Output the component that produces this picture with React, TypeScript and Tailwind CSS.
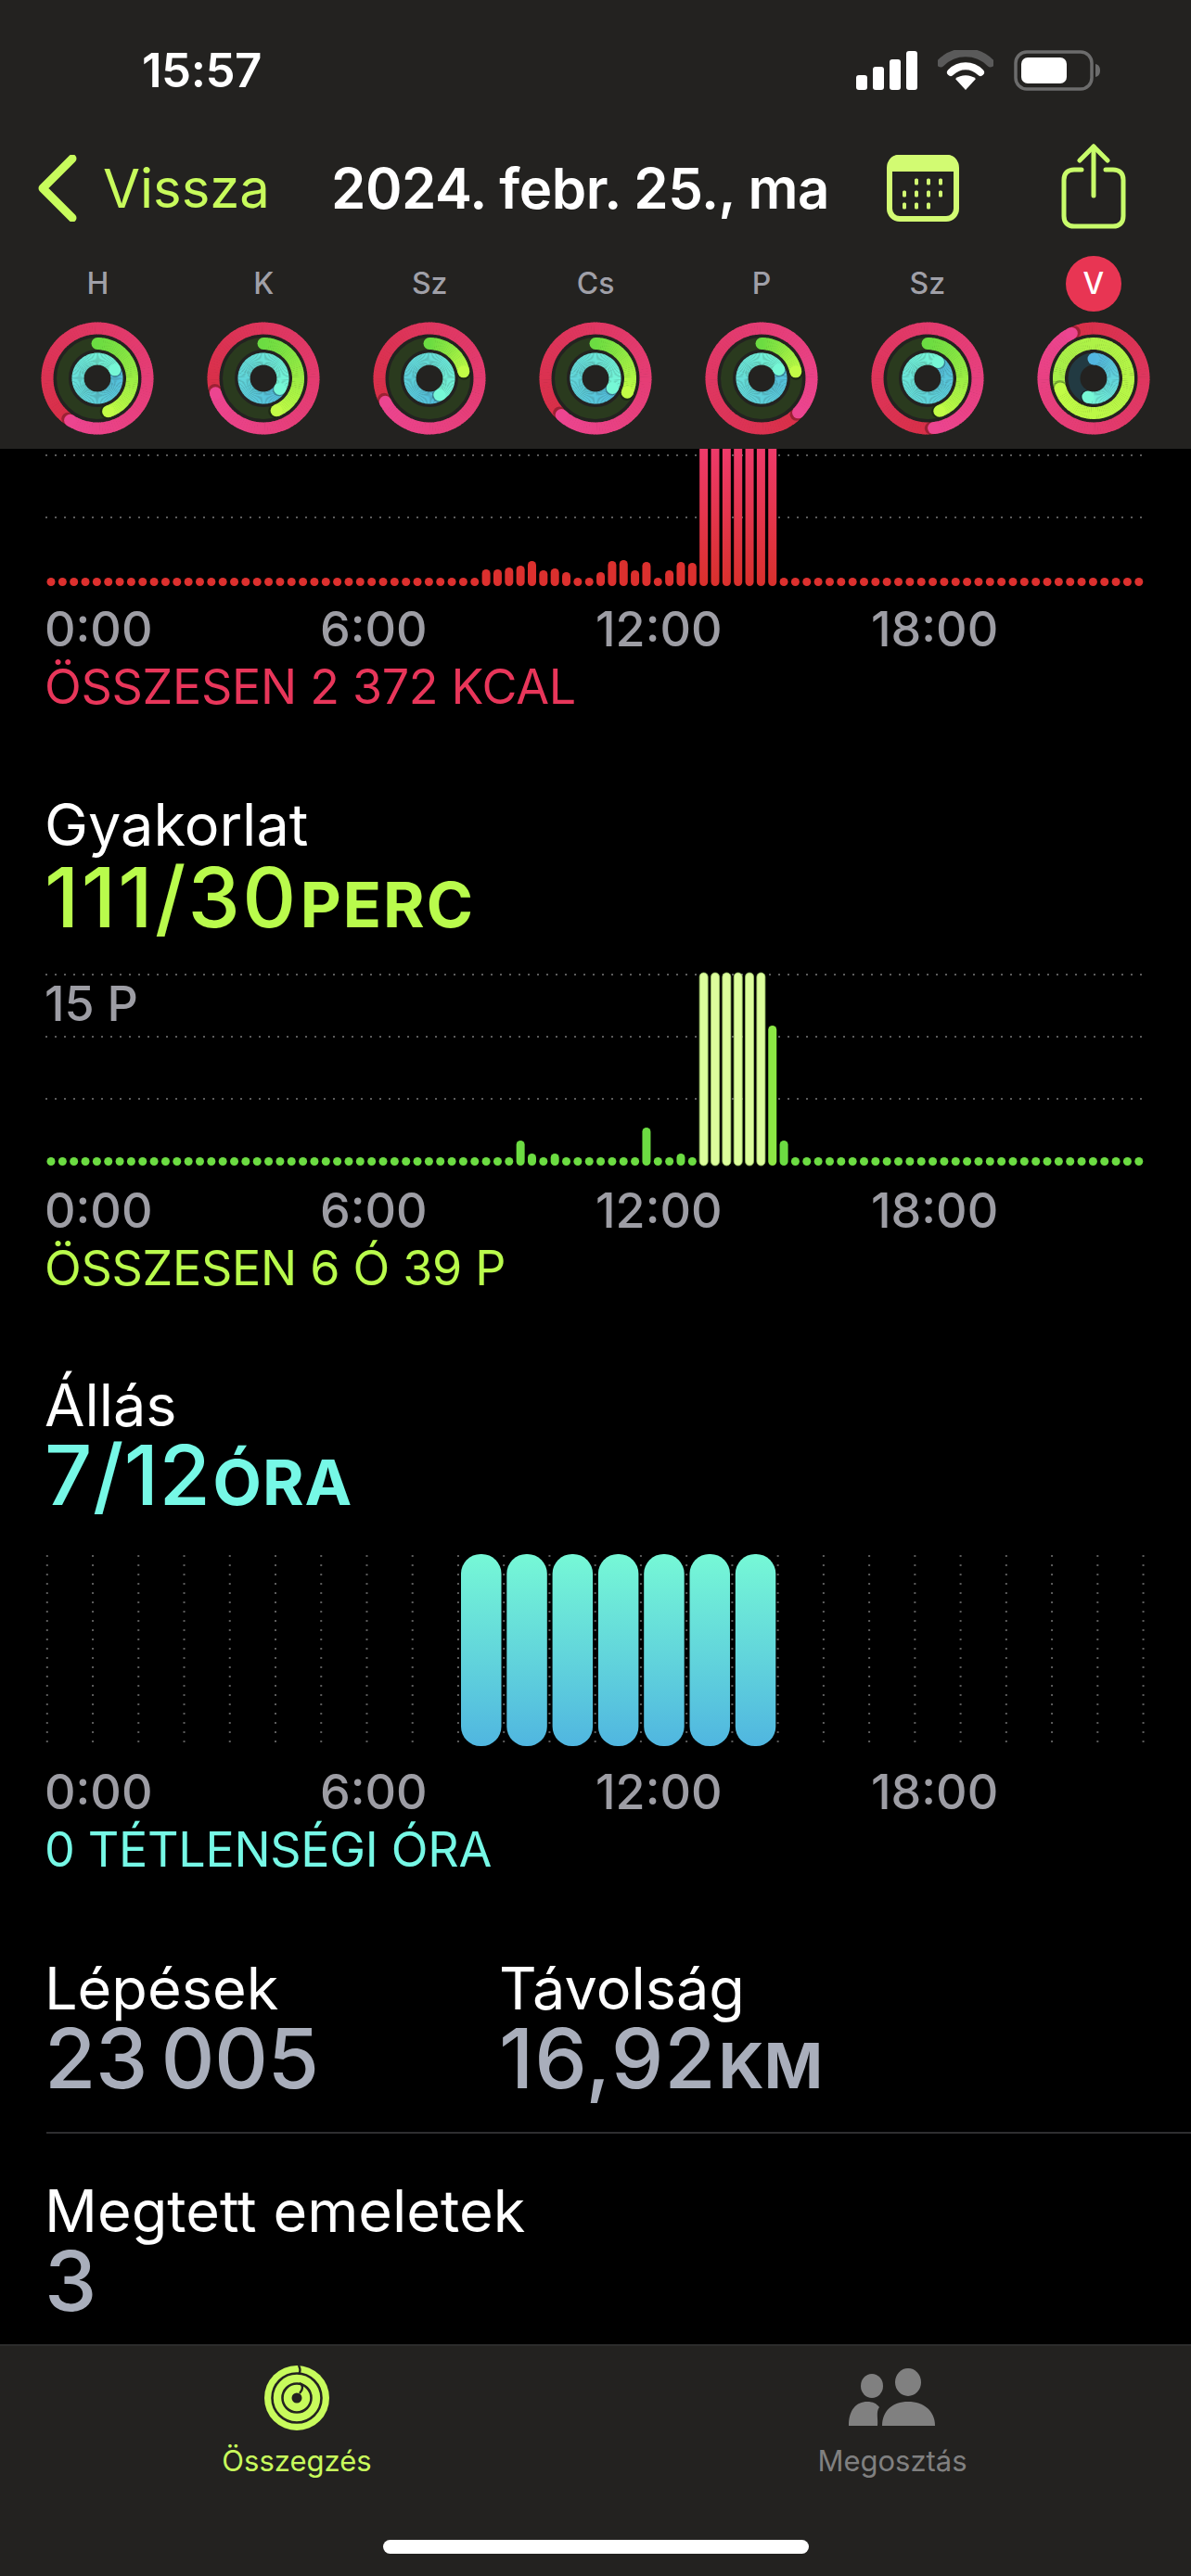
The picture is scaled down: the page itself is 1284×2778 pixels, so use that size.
const FONT = "font-['Inter','Liberation_Sans',sans-serif]";

const pol = (r: number, deg: number, c = 70) => {
  const a = ((deg - 90) * Math.PI) / 180;
  return [c + r * Math.cos(a), c + r * Math.sin(a)];
};
const hex = (s: string) => [1, 3, 5].map((i) => parseInt(s.slice(i, i + 2), 16));
const mix = (a: string, b: string, t: number) => {
  const A = hex(a);
  const B = hex(b);
  return `rgb(${A.map((v, i) => Math.round(v + (B[i] - v) * t)).join(",")})`;
};

function Arc({ r, end, c0, c1, track, full }: { r: number; end: number; c0: string; c1: string; track: string; full: boolean }) {
  const w = 13;
  const start = full ? end : 0;
  const span = full ? 360 : end;
  const step = 3;
  const n = Math.ceil(span / step);
  const seg = (i: number) => {
    const a = start + i * step;
    const b = Math.min(start + span, a + step + 0.6);
    const [x0, y0] = pol(r, a);
    const [x1, y1] = pol(r, b);
    return <path key={i} d={`M${x0} ${y0}A${r} ${r} 0 0 1 ${x1} ${y1}`} stroke={mix(c0, c1, i / n)} strokeWidth={w} fill="none" />;
  };
  const ids = Array.from({ length: n }, (_, i) => i);
  const [ex, ey] = pol(r, start + span);
  const [sx, sy] = pol(r, 0);
  const [shx, shy] = pol(r, start + span + 3);
  return (
    <g>
      {!full && <circle cx={70} cy={70} r={r} stroke={track} strokeWidth={w} fill="none" />}
      {!full && <circle cx={sx} cy={sy} r={w / 2} fill={c0} />}
      {ids.slice(0, Math.max(0, n - 18)).map(seg)}
      <circle cx={shx} cy={shy} r={w / 2 + 0.5} fill="#000" opacity={0.28} />
      {ids.slice(Math.max(0, n - 18)).map(seg)}
      <circle cx={ex} cy={ey} r={w / 2} fill={c1} />
    </g>
  );
}

const days = [
  { l: "H", o: 213, m: 162, i: 64 },
  { l: "K", o: 253, m: 158, i: 123 },
  { l: "Sz", o: 242, m: 79, i: 149 },
  { l: "Cs", o: 223, m: 114, i: 120 },
  { l: "P", o: 133, m: 79, i: 63 },
  { l: "Sz", o: 173, m: 160, i: 33 },
  { l: "V", o: 334, m: 253, i: 197, today: true },
];

function Rings({ o, m, i, today }: { o: number; m: number; i: number; today?: boolean }) {
  return (
    <svg width={140} height={140} viewBox="0 0 140 140" className="block">
      <Arc r={54} end={o} c0="#d82f47" c1="#ec4590" track="#3a1020" full />
      <Arc r={37.5} end={m} c0={today ? "#a6ee48" : "#6cdc42"} c1="#c2fc46" track="#2a3a1e" full={!!today} />
      <Arc r={21} end={i} c0={today ? "#52b6e0" : "#52bcdc"} c1="#76f8d6" track="#223a42" full={!today} />
    </svg>
  );
}

const ticks = Array.from({ length: 96 }, (_, i) => i);
const bx = (i: number) => 6 + i * 12.345;
const redH: Record<number, number> = { 38: 18, 39: 18, 40: 20, 41: 22, 42: 27, 43: 17, 44: 19, 45: 15, 48: 15, 49: 27, 50: 28, 51: 17, 52: 26, 54: 17, 55: 26, 56: 25 };
const greenH: Record<number, number> = { 41: 27, 42: 13, 44: 13, 52: 41, 55: 13, 63: 151, 64: 27 };

function Grid({ ys }: { ys: number[] }) {
  return (
    <>
      {ys.map((y) => (
        <line key={y} x1={0} x2={1184} y1={y} y2={y} stroke="#5c5c5c" strokeWidth={2} strokeDasharray="2 8" />
      ))}
    </>
  );
}

function MoveChart() {
  return (
    <svg width={1284} height={148} viewBox="0 0 1284 148" className="block -ml-[48px]">
      <defs>
        <linearGradient id="moveTall" gradientUnits="userSpaceOnUse" x1="0" y1="0" x2="0" y2="148">
          <stop offset="0" stopColor="#ee3a6a" />
          <stop offset="1" stopColor="#d9302c" />
        </linearGradient>
      </defs>
      <g transform="translate(49 0)">
        <Grid ys={[7, 74]} />
        {ticks.map((i) => {
          const tall = i >= 57 && i <= 63;
          const h = tall ? 190 : redH[i] ?? 9;
          return <rect key={i} x={bx(i) - 4.5} y={148 - h} width={9} height={h} rx={4.5} fill={tall ? "url(#moveTall)" : "#dc302e"} />;
        })}
      </g>
    </svg>
  );
}

function ExerciseChart() {
  return (
    <svg width={1284} height={218} viewBox="0 0 1284 218" className="block -ml-[48px]">
      <g transform="translate(49 0)">
        <Grid ys={[11, 78, 145]} />
        {ticks.map((i) => {
          const tall = i >= 57 && i <= 62;
          const h = tall ? 208 : greenH[i] ?? 9;
          const fill = tall ? "#dcfd9c" : i === 63 ? "#8ce744" : "#6cdc42";
          return (
            <rect key={i} x={bx(i) - 4.5} y={217 - h} width={9} height={h} rx={4.5} fill={fill} stroke={tall ? "#9cc468" : "none"} strokeWidth={tall ? 0.8 : 0} />
          );
        })}
      </g>
    </svg>
  );
}

function StandChart() {
  const cols = Array.from({ length: 25 }, (_, i) => i);
  const bars = [9, 10, 11, 12, 13, 14, 15];
  return (
    <svg width={1284} height={210} viewBox="0 0 1284 210" className="block -ml-[48px]">
      <defs>
        <linearGradient id="stand" x1="0" y1="0" x2="0" y2="1">
          <stop offset="0" stopColor="#76f8d6" />
          <stop offset="1" stopColor="#50b6e0" />
        </linearGradient>
      </defs>
      {cols.map((i) => (
        <line key={i} x1={50.8 + i * 49.24} x2={50.8 + i * 49.24} y1={1} y2={204} stroke="#5c5c5c" strokeWidth={2} strokeDasharray="2 8" />
      ))}
      {bars.map((i) => (
        <rect key={i} x={497 + (i - 9) * 49.3} y={0} width={43.5} height={207} rx={21} fill="url(#stand)" />
      ))}
    </svg>
  );
}

function Times() {
  return (
    <div className="grid grid-cols-[297px_297px_297px_297px] text-[52px] leading-[56px] font-medium text-[#9d9da4]">
      <span>0:00</span>
      <span>6:00</span>
      <span>12:00</span>
      <span>18:00</span>
    </div>
  );
}

function Big({ color, n, u, numClass, unitClass }: { color: string; n: string; u?: string; numClass: string; unitClass?: string }) {
  return (
    <div className={`flex items-baseline ${color}`}>
      <span className={`text-[90px] leading-[88px] font-medium ${numClass}`}>{n}</span>
      {u && <span className={`text-[68px] leading-[88px] font-bold ${unitClass}`}>{u}</span>}
    </div>
  );
}

function StatusIcons() {
  return (
    <div className="flex items-center">
      <svg width={68} height={42} viewBox="0 0 68 42">
        <rect x={0} y={26} width={12} height={16} rx={3} fill="#fff" />
        <rect x={18} y={17} width={12} height={25} rx={3} fill="#fff" />
        <rect x={36} y={9} width={12} height={33} rx={3} fill="#fff" />
        <rect x={54} y={0} width={12} height={42} rx={3} fill="#fff" />
      </svg>
      <svg width={60} height={44} viewBox="0 0 60 44" className="ml-[20px]">
        <path d="M3 14C18 -1 42 -1 57 14" stroke="#5a5a5a" strokeWidth={9} fill="none" strokeLinecap="round" />
        <path d="M14 24C23 15 37 15 46 24" stroke="#fff" strokeWidth={8} fill="none" strokeLinecap="round" />
        <path d="M30 43L19 31C25 26 35 26 41 31Z" fill="#fff" />
      </svg>
      <svg width={94} height={44} viewBox="0 0 94 44" className="ml-[22px]">
        <rect x={2} y={2} width={82} height={40} rx={12} stroke="#6c6c6c" strokeWidth={3.5} fill="none" />
        <rect x={8} y={8} width={49} height={28} rx={7} fill="#fff" />
        <path d="M88 15C92 16 93 19 93 22C93 25 92 28 88 29Z" fill="#6c6c6c" />
      </svg>
    </div>
  );
}

function CalendarIcon() {
  const dots = [[32, 29], [45, 29], [58, 29], [19, 42], [32, 42], [45, 42], [58, 42], [19, 55], [32, 55], [45, 55]];
  return (
    <svg width={78} height={72} viewBox="0 0 78 72" className="block">
      <rect x={3} y={3} width={72} height={66} rx={11} fill="#232220" stroke="#d2fb72" strokeWidth={6} />
      <path d="M1 18V12C1 5 6 0 12 0H66C72 0 77 5 77 12V18Z" fill="#d2fb72" />
      {dots.map(([x, y]) => (
        <rect key={`${x}-${y}`} x={x - 2} y={y - 3.5} width={4} height={7} rx={1.5} fill="#d2fb72" />
      ))}
    </svg>
  );
}

function ShareIcon() {
  return (
    <svg width={70} height={92} viewBox="0 0 70 92" fill="none" stroke="#c8fb6a" strokeWidth={5} strokeLinecap="round" strokeLinejoin="round" className="block">
      <path d="M35 3V56" />
      <path d="M20 18L35 3L50 18" />
      <path d="M22 28H14C7 28 3 32 3 39V78C3 85 7 89 14 89H56C63 89 67 85 67 78V39C67 32 63 28 56 28H48" />
    </svg>
  );
}

function SummaryIcon() {
  return (
    <svg width={72} height={72} viewBox="0 0 72 72" fill="none" className="block">
      <circle cx={36} cy={36} r={35} fill="#c8fb5c" />
      <circle cx={36} cy={36} r={26.5} stroke="#232220" strokeWidth={2.6} />
      <circle cx={36} cy={36} r={15.5} stroke="#232220" strokeWidth={2.6} />
      <circle cx={36} cy={36} r={5.5} fill="#232220" />
      <path d="M38 1C40 5 40 8 38 10" stroke="#232220" strokeWidth={2.4} />
      <path d="M39 20C43 22 43 27 39 31" stroke="#232220" strokeWidth={2.4} />
    </svg>
  );
}

function PeopleIcon() {
  return (
    <svg width={94} height={63} viewBox="0 0 94 63" fill="#808080" className="block">
      <ellipse cx={25} cy={19} rx={12} ry={13} />
      <ellipse cx={64} cy={15} rx={14} ry={15} />
      <path d="M0 62C0 45 8 36 20 36C26 36 30 38 33 42C29 47 32 55 31 62Z" />
      <path d="M36 62C36 46 47 36 64 36C81 36 93 46 93 62Z" />
    </svg>
  );
}

const LABEL = "text-[63px] leading-[66px]";

export default function App() {
  return (
    <div className={`${FONT} w-[1284px] h-[2778px] bg-black text-white flex flex-col overflow-hidden`}>
      <header className="h-[484px] shrink-0 bg-[#232220] flex flex-col relative z-10">
        <div className="h-[145px] pt-[50px] pl-[153px] pr-[97px] flex justify-between items-start">
          <span className="text-[51px] leading-[52px] font-semibold tracking-[-0.5px]">15:57</span>
          <div className="pt-[4px]">
            <StatusIcons />
          </div>
        </div>
        <div className="h-[116px] flex items-center">
          <svg width={44} height={72} viewBox="0 0 44 72" fill="none" className="ml-[40px] shrink-0">
            <path d="M38 4L6 36L38 68" stroke="#c8fb5c" strokeWidth={9} strokeLinecap="round" strokeLinejoin="round" />
          </svg>
          <span className="ml-[27px] text-[58px] leading-[64px] text-[#c8fb5c] w-[246px] shrink-0">Vissza</span>
          <span className="text-[60px] leading-[64px] font-semibold tracking-[-0.5px] w-[599px] shrink-0">2024. febr. 25., ma</span>
          <CalendarIcon />
          <div className="ml-[110px] -mt-[4px]">
            <ShareIcon />
          </div>
        </div>
        <div className="flex pl-[16px] pt-[15px]">
          {days.map((d, idx) => (
            <div key={idx} className="w-[178.9px] shrink-0 flex flex-col items-center">
              <div className={`w-[60px] h-[60px] rounded-full flex items-center justify-center text-[32px] font-medium ${d.today ? "bg-[#e83553] text-white" : "text-[#a0a0a8]"}`}>{d.l}</div>
              <div className="mt-[2px] -mb-[1px]">
                <Rings o={d.o} m={d.m} i={d.i} today={d.today} />
              </div>
            </div>
          ))}
        </div>
      </header>

      <main className="flex-1 pl-[48px] flex flex-col min-h-0 overflow-hidden">
        <MoveChart />
        <div className="mt-[19px]"><Times /></div>
        <div className="text-[#e8365a] text-[52px] leading-[56px] mt-[6px] tracking-[-0.3px]">ÖSSZESEN 2 372 KCAL</div>

        <div className={`${LABEL} mt-[87px]`}>Gyakorlat</div>
        <div className="mt-[2px]"><Big color="text-[#b9fb4c]" n="111/30" u="PERC" numClass="tracking-[2.3px]" unitClass="ml-[2px] tracking-[2px]" /></div>
        <div className="mt-[21px] relative">
          <ExerciseChart />
          <span className="absolute left-0 top-[15px] text-[52px] leading-[56px] font-medium text-[#9d9da4]">15 P</span>
        </div>
        <div className="mt-[20px]"><Times /></div>
        <div className="text-[#b9fb4c] text-[52px] leading-[56px] mt-[6px] tracking-[-0.3px]">ÖSSZESEN 6 Ó 39 P</div>

        <div className={`${LABEL} mt-[86px]`}>Állás</div>
        <div className="-mt-[1px]"><Big color="text-[#76f8e6]" n="7/12" u="ÓRA" numClass="tracking-[0.5px]" unitClass="ml-[2px] tracking-[1px]" /></div>
        <div className="mt-[34px]"><StandChart /></div>
        <div className="mt-[19px]"><Times /></div>
        <div className="text-[#76f8e6] text-[52px] leading-[56px] mt-[6px] tracking-[-0.3px]">0 TÉTLENSÉGI ÓRA</div>

        <div className="flex mt-[88px]">
          <div className="w-[490px]">
            <div className={LABEL}>Lépések</div>
            <div className="-mt-[1px]"><Big color="text-[#a9aebb]" n="23 005" numClass="tracking-[-0.5px] [word-spacing:-9px]" /></div>
          </div>
          <div>
            <div className={LABEL}>Távolság</div>
            <div className="-mt-[1px]"><Big color="text-[#a9aebb]" n="16,92" u="KM" numClass="tracking-[1px]" unitClass="ml-[2px] tracking-[0px]" /></div>
          </div>
        </div>
        <div className="h-[2px] bg-[#2e2e30] mt-[28px] ml-[2px]" />
        <div className={`${LABEL} mt-[50px]`}>Megtett emeletek</div>
        <div className="-mt-[1px]"><Big color="text-[#a9aebb]" n="3" numClass="tracking-[0.5px]" /></div>
      </main>

      <footer className="h-[250px] shrink-0 bg-[#232220] border-t-2 border-[#2c2c2c] flex flex-col items-center">
        <div className="w-full flex">
          <div className="w-[640px] flex flex-col items-center pt-[20px]">
            <SummaryIcon />
            <span className="text-[31px] leading-[36px] text-[#c8fb5c] mt-[14px]">Összegzés</span>
          </div>
          <div className="w-[644px] flex flex-col items-center pt-[24px]">
            <PeopleIcon />
            <span className="text-[31px] leading-[36px] text-[#808080] mt-[19px]">Megosztás</span>
          </div>
        </div>
        <div className="w-[459px] h-[15px] rounded-full bg-white mt-[67px]" />
      </footer>
    </div>
  );
}
